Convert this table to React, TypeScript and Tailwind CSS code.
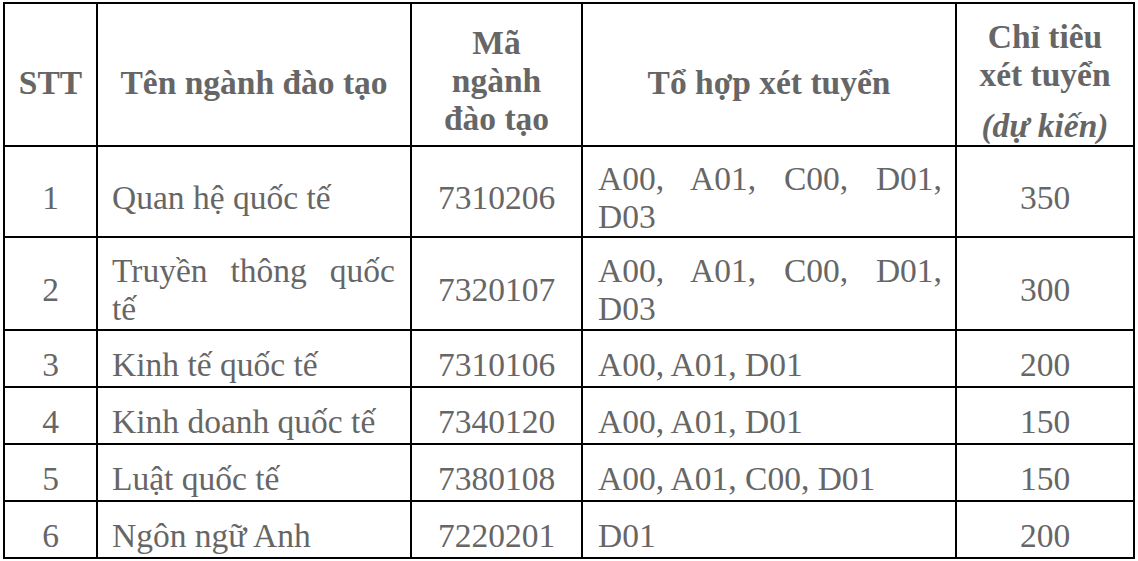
const rows = [
  { stt: "1", name: "Quan hệ quốc tế", code: "7310206", combo: "A00, A01, C00, D01, D03", quota: "350" },
  { stt: "2", name: "Truyền thông quốc tế", code: "7320107", combo: "A00, A01, C00, D01, D03", quota: "300" },
  { stt: "3", name: "Kinh tế quốc tế", code: "7310106", combo: "A00, A01, D01", quota: "200" },
  { stt: "4", name: "Kinh doanh quốc tế", code: "7340120", combo: "A00, A01, D01", quota: "150" },
  { stt: "5", name: "Luật quốc tế", code: "7380108", combo: "A00, A01, C00, D01", quota: "150" },
  { stt: "6", name: "Ngôn ngữ Anh", code: "7220201", combo: "D01", quota: "200" },
];

const cell = "border-r-2 border-b-2 border-black flex items-center";

export default function App() {
  return (
    <div className="w-[1138px] h-[561px] bg-white pt-[2px] pl-[3px] font-['Liberation_Serif','Times_New_Roman',serif] text-[33.5px] leading-[38px] text-[#666666]">
      <div className="grid grid-cols-[93px_314px_171px_374px_178px] grid-rows-[143px_91px_93px_57px_57px_57px_57px] w-[1132px] border-l-2 border-t-2 border-black">
        {/* Header */}
        <div className={`${cell} justify-center font-bold pt-[16px]`}>STT</div>
        <div className={`${cell} justify-center font-bold pt-[16px]`}>Tên ngành đào tạo</div>
        <div className={`${cell} justify-center text-center font-bold pt-[12px] px-[14px]`}>Mã ngành đào tạo</div>
        <div className={`${cell} justify-center font-bold pt-[16px]`}>Tổ hợp xét tuyển</div>
        <div className={`${cell} flex-col justify-center text-center font-bold pt-[14px] px-[14px]`}>
          <p>Chỉ tiêu xét tuyển</p>
          <p className="italic mt-[13px]">(dự kiến)</p>
        </div>

        {/* Body */}
        {rows.map((r) => (
          <div key={r.stt} className="contents">
            <div className={`${cell} justify-center pt-[13px]`}>{r.stt}</div>
            <div className={`${cell} pt-[13px] pl-[14px] pr-[15px]`}>
              <p className="w-full text-justify">{r.name}</p>
            </div>
            <div className={`${cell} justify-center pt-[13px]`}>{r.code}</div>
            <div className={`${cell} pt-[13px] pl-[15px] pr-[13px]`}>
              <p className="w-full text-justify">{r.combo}</p>
            </div>
            <div className={`${cell} justify-center pt-[13px]`}>{r.quota}</div>
          </div>
        ))}
      </div>
    </div>
  );
}
